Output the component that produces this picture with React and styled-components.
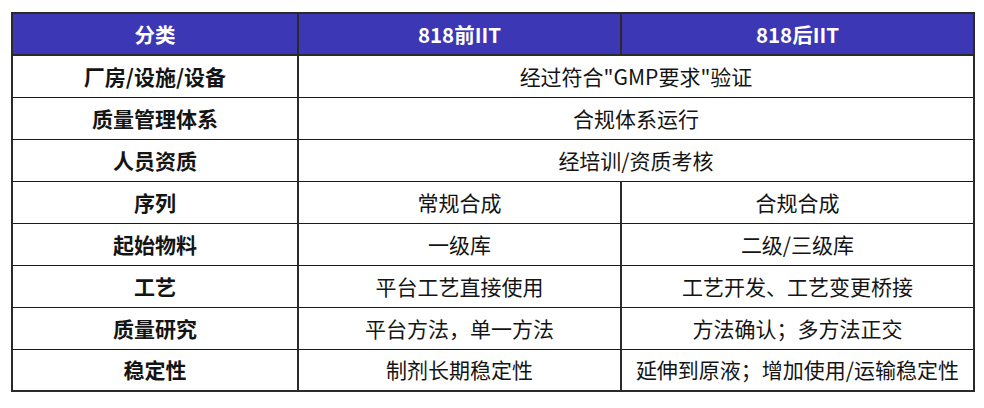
import React from "react";
import styled, { createGlobalStyle } from "styled-components";

const Global = createGlobalStyle`
  html, body { margin: 0; padding: 0; background: #ffffff; }
  body { font-family: "Noto Sans CJK SC", "Noto Sans", sans-serif; }
`;

const Page = styled.div`
  padding: 12px 0 0 11px;
`;

const Table = styled.table`
  border-collapse: collapse;
  table-layout: fixed;
  width: 962px;
  border: 2px solid #2a2a2a;
`;

const Col = styled.col`
  width: ${(p) => p.$w}px;
`;

const Row = styled.tr`
  height: 42px;
`;

const HeadCell = styled.th`
  background: #3c37b5;
  color: #ffffff;
  font-weight: 700;
  font-size: 20.5px;
  text-align: center;
  vertical-align: middle;
  padding: 0;
  border: 2px solid #2a2a2a;
  line-height: 1;
`;

const Cell = styled.td`
  color: #141414;
  font-weight: ${(p) => (p.$bold ? 700 : 400)};
  font-size: 21px;
  text-align: center;
  vertical-align: middle;
  padding: 0;
  border-left: 2px solid #2a2a2a;
  border-right: 2px solid #2a2a2a;
  border-top: 1.5px solid #1a1a1a;
  border-bottom: 1.5px solid #1a1a1a;
  line-height: 1;
  white-space: nowrap;
`;

const rows = [
  ["厂房/设施/设备", "经过符合\"GMP要求\"验证"],
  ["质量管理体系", "合规体系运行"],
  ["人员资质", "经培训/资质考核"],
  ["序列", "常规合成", "合规合成"],
  ["起始物料", "一级库", "二级/三级库"],
  ["工艺", "平台工艺直接使用", "工艺开发、工艺变更桥接"],
  ["质量研究", "平台方法，单一方法", "方法确认；多方法正交"],
  ["稳定性", "制剂长期稳定性", "延伸到原液；增加使用/运输稳定性"],
];

export default function App() {
  return (
    <>
      <Global />
      <Page>
        <Table>
          <colgroup>
            <Col $w={286} />
            <Col $w={323} />
            <Col $w={353} />
          </colgroup>
          <thead>
            <Row>
              <HeadCell>分类</HeadCell>
              <HeadCell>818前IIT</HeadCell>
              <HeadCell>818后IIT</HeadCell>
            </Row>
          </thead>
          <tbody>
            {rows.map((r) => (
              <Row key={r[0]}>
                <Cell $bold>{r[0]}</Cell>
                {r.length === 2 ? (
                  <Cell colSpan={2}>{r[1]}</Cell>
                ) : (
                  <>
                    <Cell>{r[1]}</Cell>
                    <Cell>{r[2]}</Cell>
                  </>
                )}
              </Row>
            ))}
          </tbody>
        </Table>
      </Page>
    </>
  );
}
